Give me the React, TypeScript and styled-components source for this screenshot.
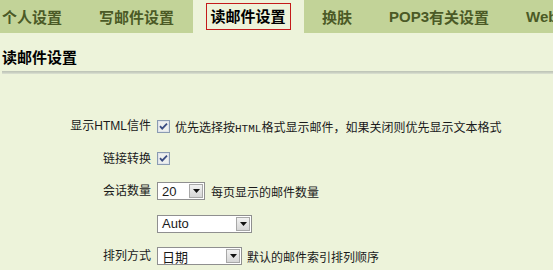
import React from "react";
import styled, { createGlobalStyle } from "styled-components";

const Global = createGlobalStyle`
  html, body { margin: 0; padding: 0; background: #edf3da; overflow: hidden; }
  body { font-family: "Liberation Sans", "Noto Sans CJK SC", sans-serif; font-size: 12px; color: #000; }
`;

const Page = styled.div`
  width: 553px;
  height: 270px;
  background: #edf3da;
`;

const TabBar = styled.div`
  display: flex;
  height: 33px;
  background: #c2d398;
  white-space: nowrap;
  overflow: hidden;
`;

const Tab = styled.div<{ $active?: boolean; $first?: boolean }>`
  display: flex;
  align-items: center;
  padding: 0 ${(p) => (p.$active ? "13px" : "18.5px")};
  padding-left: ${(p) => (p.$first ? "2px" : p.$active ? "13px" : "18.5px")};
  background: ${(p) => (p.$active ? "#edf3da" : "transparent")};
  color: ${(p) => (p.$active ? "#000" : "#4b5a26")};
  font-family: "Noto Sans CJK SC", sans-serif;
  font-weight: 700;
  font-size: 15px;
  line-height: 20px;
  flex-shrink: 0;
`;

const TabLatin = styled.span`
  font-family: "Liberation Sans", sans-serif;
  font-weight: 700;
`;

const ActiveBox = styled.span`
  border: 1px solid #c41a1a;
  padding: 2px 4px 3px;
  line-height: 20px;
`;

const Title = styled.div`
  margin: 14px 0 0 2px;
  height: 20px;
  line-height: 20px;
  font-family: "Noto Sans CJK SC", sans-serif;
  font-weight: 700;
  font-size: 15px;
`;

const Divider = styled.div`
  margin: 4px 0 0 2px;
  height: 3px;
  background: linear-gradient(#bcc2b5, #c9cfc1 50%, #dde2d3);
`;

const Form = styled.div`
  display: grid;
  grid-template-columns: 151px auto;
  grid-auto-rows: 18px;
  column-gap: 6px;
  row-gap: 14.5px;
  padding-top: 43px;
`;

const Label = styled.div`
  text-align: right;
  line-height: 18px;
  white-space: nowrap;
  color: #1a1a1a;
`;

const Control = styled.div<{ $gap?: number }>`
  display: flex;
  align-items: center;
  gap: ${(p) => p.$gap ?? 5}px;
  white-space: nowrap;
  color: #1a1a1a;
`;

const Mono = styled.span`
  font-family: "Liberation Mono", monospace;
  font-size: 11px;
`;

const SelectBox = styled.div<{ $w: number }>`
  width: ${(p) => p.$w}px;
  height: 18px;
  box-sizing: border-box;
  border: 1px solid #8f8f8f;
  background: #fff;
  display: flex;
  align-items: center;
  justify-content: space-between;
  padding: 0 1px 0 4px;
  font-size: 13px;
`;

const SelectBtn = styled.span`
  width: 14px;
  height: 14px;
  box-sizing: border-box;
  border: 1px solid #a8a8a8;
  background: linear-gradient(#f2f2f2, #d6d6d6);
  display: flex;
  align-items: center;
  justify-content: center;
`;

const Select = ({ value, w }: { value: string; w: number }) => (
  <SelectBox $w={w}>
    <span>{value}</span>
    <SelectBtn>
      <svg width="7" height="4" viewBox="0 0 7 4">
        <path d="M0 0h7L3.5 4z" fill="#111" />
      </svg>
    </SelectBtn>
  </SelectBox>
);

const Check = () => (
  <svg width="13" height="13" viewBox="0 0 13 13">
    <rect x="0.5" y="0.5" width="12" height="12" fill="#eef0ee" stroke="#8a9bb2" />
    <rect x="1.5" y="1.5" width="10" height="10" fill="none" stroke="#dfe3ea" />
    <path d="M3 6.2l2.2 2.4L10 3.6" fill="none" stroke="#3b4d82" strokeWidth="1.8" />
  </svg>
);

export default function App() {
  return (
    <Page>
      <Global />
      <TabBar>
        <Tab $first>个人设置</Tab>
        <Tab>写邮件设置</Tab>
        <Tab $active>
          <ActiveBox>读邮件设置</ActiveBox>
        </Tab>
        <Tab>换肤</Tab>
        <Tab>
          <TabLatin>POP3</TabLatin>有关设置
        </Tab>
        <Tab>
          <TabLatin>WebMail</TabLatin>
        </Tab>
      </TabBar>
      <Title>读邮件设置</Title>
      <Divider />
      <Form>
        <Label>显示HTML信件</Label>
        <Control>
          <Check />
          <span>
            优先选择按<Mono>HTML</Mono>格式显示邮件，如果关闭则优先显示文本格式
          </span>
        </Control>
        <Label>链接转换</Label>
        <Control>
          <Check />
        </Control>
        <Label>会话数量</Label>
        <Control $gap={6}>
          <Select value="20" w={48} />
          <span>每页显示的邮件数量</span>
        </Control>
        <Label />
        <Control>
          <Select value="Auto" w={95} />
        </Control>
        <Label>排列方式</Label>
        <Control>
          <Select value="日期" w={85} />
          <span>默认的邮件索引排列顺序</span>
        </Control>
      </Form>
    </Page>
  );
}
